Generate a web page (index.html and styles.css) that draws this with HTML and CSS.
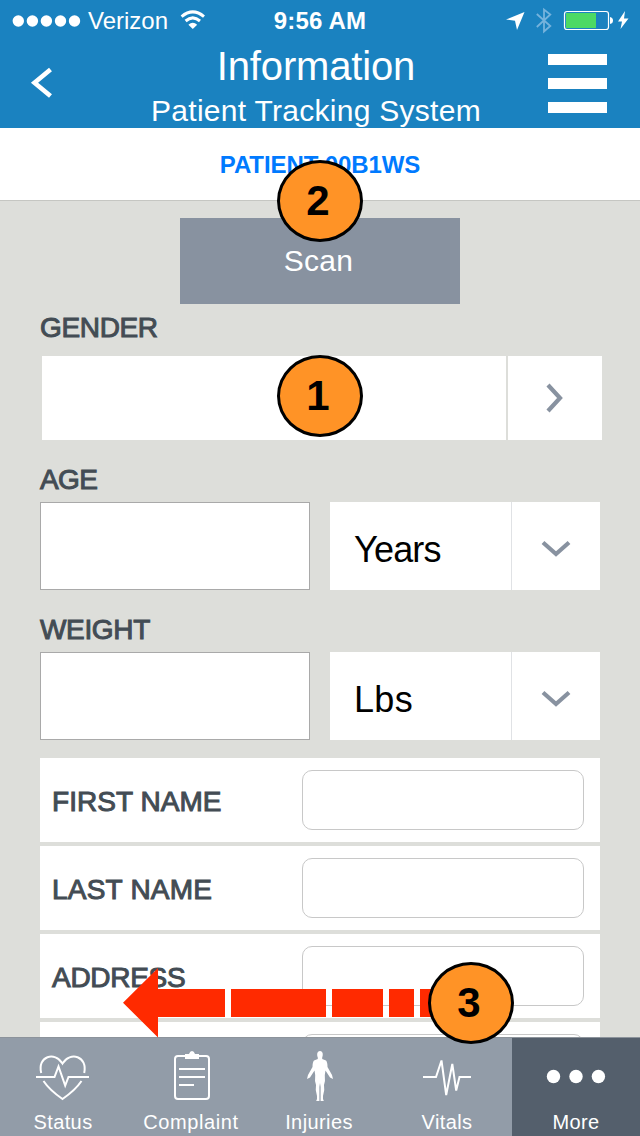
FILE: index.html
```html
<!DOCTYPE html>
<html lang="en">
<head>
<meta charset="utf-8">
<title>Information - Patient Tracking System</title>
<link rel="stylesheet" href="styles.css">
</head>
<body>
<div class="screen">
  <header class="header">
    <div class="status">
      <div class="carrier">
        <svg width="70" height="14" viewBox="0 0 70 14" fill="#fff"><circle cx="6.3" cy="7" r="5.7"/><circle cx="20.4" cy="7" r="5.7"/><circle cx="34.4" cy="7" r="5.7"/><circle cx="48.5" cy="7" r="5.7"/><circle cx="62.5" cy="7" r="5.7"/></svg>
        <span class="carrier-name">Verizon</span>
        <svg class="wifi" width="26" height="20" viewBox="0 0 26 20"><g fill="none" stroke="#fff" stroke-width="3"><path d="M1.6 6.6Q12.8-2.8 24 6.6"/><path d="M5.600 11Q12.800 4.800 20 11"/></g><path d="M8.400 14.700Q12.800 10.900 17.200 14.700L12.800 19z" fill="#fff"/></svg>
      </div>
      <div class="clock">9:56 AM</div>
      <div class="indicators">
        <svg width="125" height="30" viewBox="505 5 125 30"><path d="M506 19.500L524.500 12L517 30L515 20.800z" fill="#fff"/><path d="M536.800 14L550.300 26L544 31.500V9.500L550.300 14.500L536.800 27" fill="none" stroke="#76b3dc" stroke-width="1.800"/><rect x="564.500" y="11.500" width="44" height="18" rx="2.500" fill="none" stroke="#fff" stroke-width="1.200"/><path d="M566 13h30v15h-30z" fill="#4cd964"/><path d="M610 17q3 .5 3 3.500t-3 3.500z" fill="#fff"/><path d="M625 11L618 21.500H622L620.500 29L628.500 18.500H624z" fill="#fff"/></svg>
      </div>
    </div>
    <div class="titlebar">
      <svg class="back" width="24" height="34" viewBox="0 0 24 34"><path d="M20.500 3.500L4.500 16.700L20.500 30" fill="none" stroke="#fff" stroke-width="4.600"/></svg>
      <div class="titles">
        <h1 class="title">Information</h1>
        <div class="subtitle">Patient Tracking System</div>
      </div>
      <div class="menu"><i></i><i></i><i></i></div>
    </div>
  </header>
  <div class="patient">PATIENT 00B1WS</div>
  <main class="form">
    <div class="scan">Scan</div>
    <div class="label gender-label"><span class="t-gender">GENDER</span></div>
    <div class="gender">
      <div class="gender-value"></div>
      <div class="gender-go"><svg width="20" height="32" viewBox="0 0 20 32"><path d="M3 3L15 16L3 29" fill="none" stroke="#8892a0" stroke-width="4.200"/></svg></div>
    </div>
    <div class="label age-label"><span class="t-age">AGE</span></div>
    <div class="measure">
      <div class="input"></div>
      <div class="select"><span class="value t-years">Years</span><span class="drop"><svg width="32" height="20" viewBox="0 0 32 20"><path d="M3 3.500L16 15L29 3.500" fill="none" stroke="#8892a0" stroke-width="4.200"/></svg></span></div>
    </div>
    <div class="label weight-label"><span class="t-weight">WEIGHT</span></div>
    <div class="measure">
      <div class="input"></div>
      <div class="select"><span class="value t-lbs">Lbs</span><span class="drop"><svg width="32" height="20" viewBox="0 0 32 20"><path d="M3 3.500L16 15L29 3.500" fill="none" stroke="#8892a0" stroke-width="4.200"/></svg></span></div>
    </div>
    <div class="details">
      <div class="row"><span class="label t-first">FIRST NAME</span><div class="field"></div></div>
      <div class="row"><span class="label t-last">LAST NAME</span><div class="field"></div></div>
      <div class="row"><span class="label t-address">ADDRESS</span><div class="field"></div></div>
      <div class="row"><span class="label"></span><div class="field"></div></div>
    </div>
  </main>
  <nav class="tabs">
    <div class="tab">
      <svg width="128" height="64" viewBox="0 1040 128 64" fill="none" stroke="#fff" stroke-width="2"><path d="M41.200 1073C37 1056 55 1051 62.500 1063.500C70 1051 88 1056 84.200 1073M43.500 1081Q49.500 1090 62.500 1099Q75.500 1090 81.500 1081M36 1077H54.500L58.500 1066.500L65.200 1085.500L68.500 1077H89"/></svg>
      <span class="t-status">Status</span>
    </div>
    <div class="tab">
      <svg width="128" height="64" viewBox="128 1040 128 64" fill="none" stroke="#fff" stroke-width="2"><rect x="175" y="1056" width="34" height="43" rx="3"/><path d="M179 1069H205M179 1077H205M179 1085H194"/><path d="M185 1054H189Q190 1051 192 1051T195 1054H199V1059H185z" fill="#fff" stroke="none"/></svg>
      <span class="t-complaint">Complaint</span>
    </div>
    <div class="tab">
      <svg width="128" height="64" viewBox="256 1040 128 64" fill="#fff"><path d="M320 1051C323.200 1051 323.200 1055 322.200 1057.500V1059L326 1060.500Q327.500 1062 327.500 1067L332 1075L333 1079L330 1077.500L325.500 1070.500L324.800 1075Q325.500 1081 324 1085Q325 1090 323 1096V1099L323.800 1101H320.600V1087L320 1083L319.400 1087V1101H316.200L317 1099V1096Q315 1090 316 1085Q314.500 1081 315.200 1075L314.500 1070.500L310 1077.500L307 1079L308 1075L312.500 1067Q312.500 1062 314 1060.500L317.800 1059V1057.500C316.800 1055 316.800 1051 320 1051z"/></svg>
      <span class="t-injuries">Injuries</span>
    </div>
    <div class="tab">
      <svg width="128" height="64" viewBox="384 1040 128 64" fill="none" stroke="#fff" stroke-width="2" stroke-miterlimit="3"><path d="M423 1077H436L441.500 1060.500L446.200 1095L452.300 1064L456.200 1090.500L459.500 1077H471"/></svg>
      <span class="t-vitals">Vitals</span>
    </div>
    <div class="tab active">
      <svg width="128" height="64" viewBox="512 1040 128 64" fill="#fff"><circle cx="553.500" cy="1076.500" r="6.700"/><circle cx="576" cy="1076.500" r="6.700"/><circle cx="598.400" cy="1076.500" r="6.700"/></svg>
      <span class="t-more">More</span>
    </div>
  </nav>
  <svg class="swipe" width="320" height="72" viewBox="122 967 320 72" fill="#ff2a00"><path d="M123 1002.700L158 968V989H225V1017H158V1037.500zM231 989H326V1017H231zM332 989H383V1017H332zM389 989H414V1017H389zM420 989H440V1017H420z"/></svg>
  <div class="marker marker-two">2</div>
  <div class="marker marker-one">1</div>
  <div class="marker marker-three">3</div>
</div>
</body>
</html>
```
FILE: styles.css
```css
* { box-sizing: border-box; }
body { margin: 0; font-family: "Liberation Sans", Arial, sans-serif; }
svg { display: block; flex: none; }
.screen { position: relative; width: 640px; height: 1136px; overflow: hidden; display: flex; flex-direction: column; background: #dddeda; }
.header { flex: none; height: 128px; background: #1a82c0; color: #fff; }
.status { display: grid; grid-template-columns: 240px 160px 240px; height: 41px; line-height: 41px; font-size: 24px; }
.carrier { display: flex; align-items: center; padding-left: 12px; }
.carrier-name { margin-left: 6px; width: 81px; }
.wifi { margin-left: 11px; margin-top: -2px; }
.clock { text-align: center; font-weight: bold; letter-spacing: .2px; }
.indicators { display: flex; justify-content: flex-end; padding: 5px 10px 0 0; }
.titlebar { display: flex; height: 87px; }
.back { margin: 25px 0 0 30px; }
.titles { flex: none; width: 332px; margin-left: 96px; text-align: center; }
.title { margin: 2px 0 0; font-size: 40px; line-height: 46px; font-weight: normal; letter-spacing: -.15px; }
.subtitle { font-size: 30px; line-height: 44px; white-space: nowrap; letter-spacing: .28px; }
.menu { display: flex; flex-direction: column; gap: 13px; margin: 13px 0 0 66px; width: 59px; }
.menu i { height: 11px; background: #fff; }
.patient { flex: none; height: 73px; border-bottom: 1px solid #c5c6c2; background: #fff; color: #007aff; text-align: center; line-height: 73px; font-size: 24px; font-weight: bold; letter-spacing: -.1px; }
.form { flex: none; height: 836px; overflow: hidden; padding: 17px 38px 0 40px; }
.scan { margin: 0 auto 0 140px; width: 280px; height: 86px; padding-right: 3px; line-height: 86px; text-align: center; background: #8892a0; color: #fff; font-size: 30px; letter-spacing: .25px; }
.label { color: #434c54; font-size: 28px; white-space: nowrap; -webkit-text-stroke: 1px #434c54; }
.gender-label { height: 52px; line-height: 47px; letter-spacing: -.35px; }
.gender { display: flex; gap: 2px; margin-left: 2px; height: 84px; }
.gender-value { flex: none; width: 464px; background: #fff; }
.gender-go { display: flex; flex: none; align-items: center; width: 94px; padding-left: 37px; background: #fff; }
.age-label { height: 62px; padding-top: 14px; line-height: 52px; letter-spacing: -.6px; }
.weight-label { height: 62px; padding-top: 14px; line-height: 52px; letter-spacing: -.35px; }
.measure { display: flex; gap: 20px; height: 88px; }
.input { width: 270px; border: 1px solid #a9a9a9; background: #fff; }
.select { display: flex; width: 270px; background: #fff; color: #000; }
.value { width: 182px; padding-left: 24px; border-right: 1px solid #e0e2e5; font-size: 36px; line-height: 95px; letter-spacing: -.8px; }
.t-lbs { letter-spacing: .3px; }
.drop { display: flex; align-items: center; padding: 5px 0 0 28px; }
.details { display: flex; flex-direction: column; gap: 4px; width: 560px; margin-top: 18px; }
.row { display: flex; align-items: center; justify-content: space-between; height: 84px; padding: 0 16px 0 12px; background: #fff; line-height: 84px; }
.row .label { padding-top: 3px; }
.t-first { letter-spacing: .05px; }
.t-last { letter-spacing: .22px; }
.t-address { letter-spacing: -.3px; }
.field { width: 282px; height: 60px; border: 1px solid #c8c8c8; border-radius: 10px; }
.tabs { flex: none; display: flex; height: 99px; color: #fff; font-size: 20px; }
.tab { display: flex; flex-direction: column; align-items: center; width: 128px; padding-top: 2px; border-top: 1px solid #8c939b; background: #929ca8; line-height: 36px; letter-spacing: .4px; }
.tab span { padding-right: 2px; }
.tab .t-complaint { letter-spacing: .6px; }
.tab .t-more { padding-right: 0; }
.tab.active { background: #545f6c; }
.swipe { position: absolute; left: 122px; top: 967px; }
.marker { position: absolute; width: 86px; height: 82px; padding-right: 4px; border: 3px solid #000; border-radius: 50%; background: #ff9326; color: #000; text-align: center; font-size: 42px; line-height: 76px; font-weight: bold; }
.marker-two { left: 277px; top: 160px; }
.marker-one { left: 277px; top: 355px; }
.marker-three { left: 428px; top: 962px; }
```
